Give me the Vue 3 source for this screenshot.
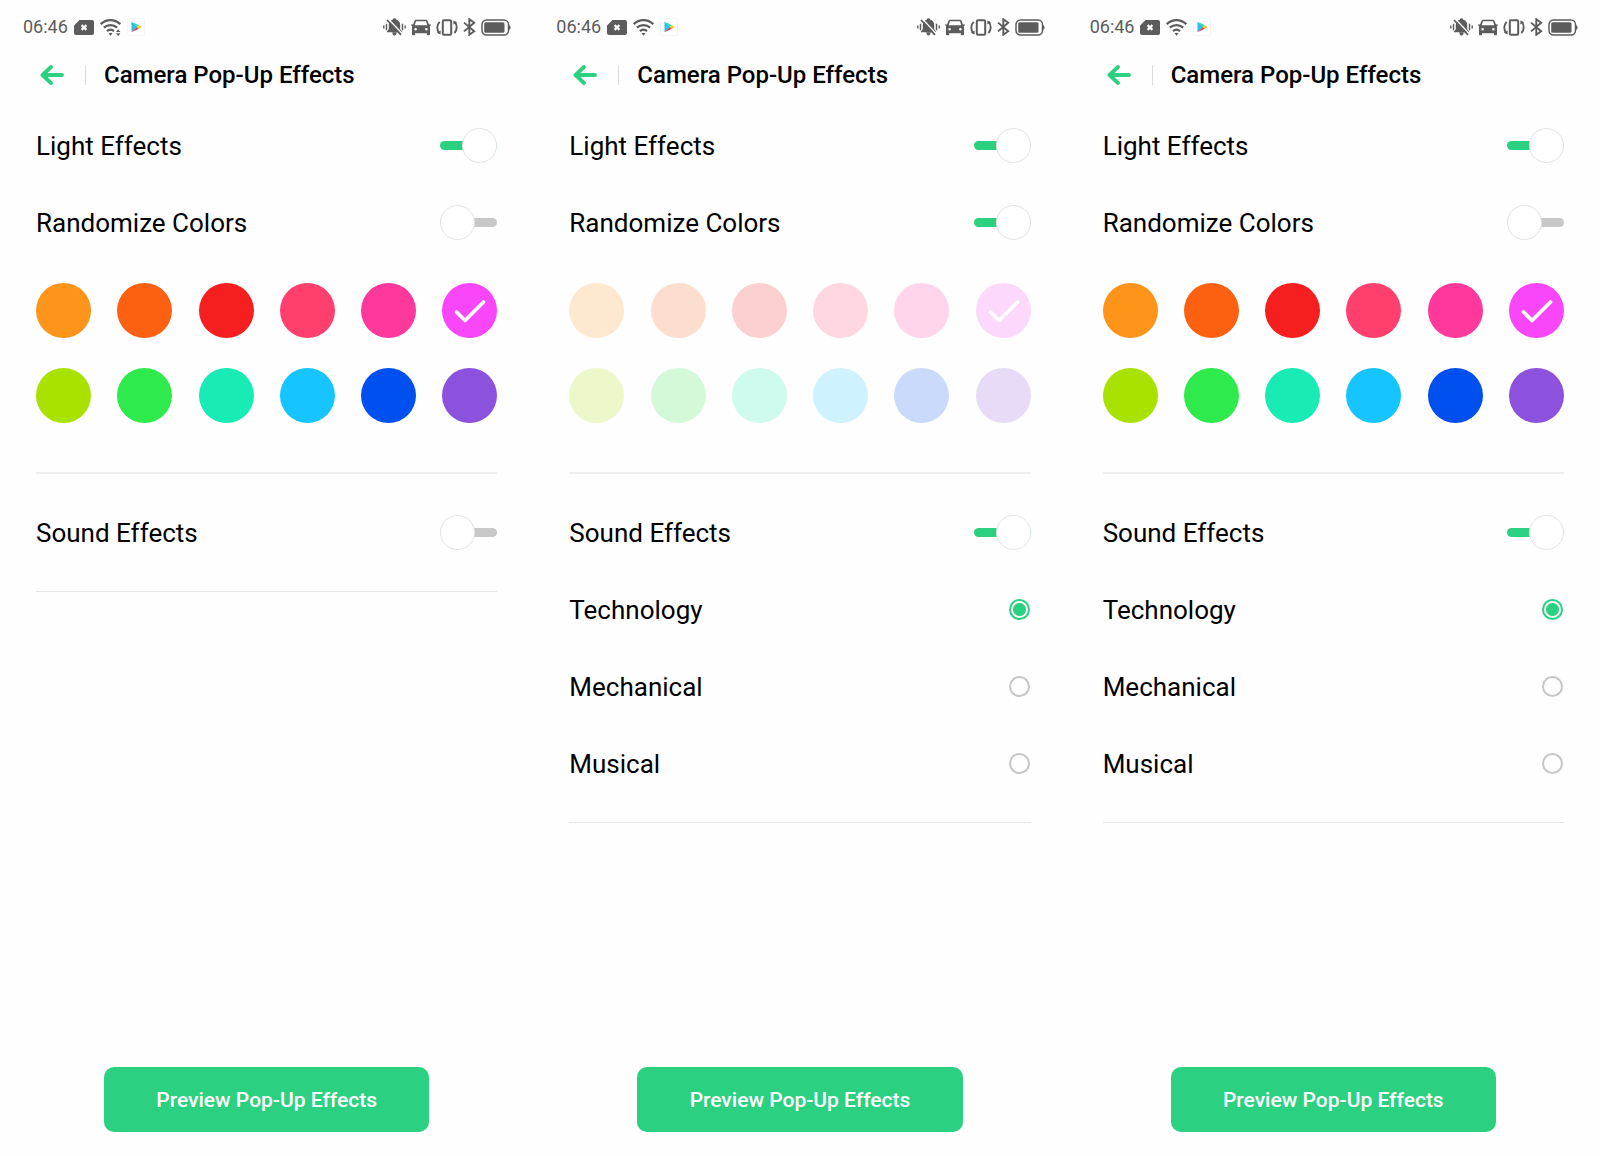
<script setup>
import { ref } from 'vue'

const colors = [
  { name: 'Orange', value: '#ff941a' },
  { name: 'Deep orange', value: '#fc6011' },
  { name: 'Red', value: '#f51f1f' },
  { name: 'Coral', value: '#ff406e' },
  { name: 'Pink', value: '#ff389c' },
  { name: 'Magenta', value: '#f846f8' },
  { name: 'Lime', value: '#a9e200' },
  { name: 'Green', value: '#2fea4c' },
  { name: 'Mint', value: '#18ebb3' },
  { name: 'Sky blue', value: '#16c4ff' },
  { name: 'Blue', value: '#0050f0' },
  { name: 'Purple', value: '#8d52dd' }
]

const sounds = ['Technology', 'Mechanical', 'Musical']

// each screen keeps its own settings
const screens = ref([
  { id: 'a', transfer: true, light: true, random: false, sound: false, color: 'Magenta', tone: 'Technology' },
  { id: 'b', transfer: false, light: true, random: true, sound: true, color: 'Magenta', tone: 'Technology' },
  { id: 'c', transfer: false, light: true, random: false, sound: true, color: 'Magenta', tone: 'Technology' }
])
</script>

<template>
  <div class="screens">
    <section v-for="s in screens" :key="s.id" class="screen">
      <div class="status-bar">
        <div class="status-left">
          <span class="time">06:46</span>
          <svg class="sim" width="20" height="15" viewBox="0 0 20 15">
            <path d="M5.5 0H18a2 2 0 0 1 2 2v11a2 2 0 0 1-2 2H2a2 2 0 0 1-2-2V5.5z" fill="#5c5c5c" />
            <path d="M7.600 5.100l4.800 4.800M12.400 5.100L7.600 9.900" stroke="#fff" stroke-width="2.200" />
          </svg>
          <svg class="wifi" width="21" height="17" viewBox="0 0 21 17">
            <g fill="none" stroke="#5c5c5c" stroke-width="2.300">
              <path d="M.8 5.2C6.300-.2 14.700-.2 20.200 5.200" />
              <path d="M3.900 8.700c3.700-3.500 9.500-3.500 13.200 0" />
              <path d="M7 12.100c2-1.800 5-1.800 7 0" />
            </g>
            <path d="M8.500 14.300q2-1.200 4 0l-2 2.400z" fill="#5c5c5c" />
            <g v-if="s.transfer">
              <path d="M14.600 9.800h6.400V17h-6.400z" fill="#fff" />
              <path d="M16 13l2.200-2.700L20.400 13zM16 14.200l2.200 2.700 2.200-2.700z" fill="#5c5c5c" />
            </g>
          </svg>
          <svg class="play" width="18" height="18" viewBox="0 0 18 18">
            <rect x=".5" y=".5" width="17" height="17" rx="2" fill="#fff" stroke="#f4f4f4" />
            <path d="M4.500 3.800v10.400L9.800 9z" fill="#1fc3ea" />
            <path d="M4.500 3.800L11.800 7.300 9.800 9z" fill="#22d3b0" />
            <path d="M4.500 14.200L11.800 10.700 9.800 9z" fill="#e5394f" />
            <path d="M11.800 7.300L14.600 9l-2.800 1.700-2-1.700z" fill="#fbc31c" />
          </svg>
        </div>
        <div class="status-right">
          <svg width="23" height="18" viewBox="0 0 23 18">
            <path d="M11.500.3c.9 0 1.400.5 1.500 1.200 2.600.7 4.200 2.700 4.200 5.500v4.300l1.900 2.200v.8H3.900v-.8l1.900-2.200V7c0-2.800 1.600-4.800 4.200-5.500.1-.7.6-1.200 1.500-1.200z" fill="#5c5c5c" />
            <path d="M9.300 14.200h4.400c0 2-.8 3.200-2.200 3.200s-2.200-1.200-2.200-3.200z" fill="#5c5c5c" />
            <path d="M5.300.9l14 14.800" stroke="#fff" stroke-width="1.500" />
            <path d="M4 2l14 14.800" stroke="#5c5c5c" stroke-width="1.800" />
            <path d="M.8 7.500v3M3.500 5.800v6.400M19.500 5.800v6.400M22.200 7.500v3" stroke="#5c5c5c" stroke-width="1.400" />
          </svg>
          <svg width="20" height="17" viewBox="0 0 20 17">
            <path fill-rule="evenodd" d="M5 .8h10c.8 0 1.300.4 1.600 1.100l1.400 3.700 1.600-.4.300 1.200-1.200.7c.2.400.3.800.3 1.300v7.100c0 .5-.3.800-.8.800h-1.500c-.5 0-.8-.3-.8-.8V14.200H4.100v1.300c0 .5-.3.800-.8.800H1.800c-.5 0-.8-.3-.8-.8V8.400c0-.5.100-.9.300-1.300L.1 6.400.4 5.200l1.600.4 1.400-3.700C3.700 1.200 4.200.8 5 .8zM5 2.300L3.700 6.300h12.600L15 2.300zM4.600 8.900a1.300 1.300 0 1 0 0 2.600 1.300 1.300 0 0 0 0-2.600zm10.800 0a1.300 1.300 0 1 0 0 2.600 1.300 1.300 0 0 0 0-2.600z" fill="#5c5c5c" />
          </svg>
          <svg width="22" height="17" viewBox="0 0 22 17">
            <g fill="none" stroke="#5c5c5c">
              <rect x="6.800" y="1.200" width="8.400" height="14.600" rx="1.200" stroke-width="2" />
              <path d="M3.600 2.800C.6 6 .6 11 3.200 14M18.400 14.200c3-3.200 3-8.200.4-11.200" stroke-width="1.900" />
            </g>
            <path d="M.8 13.800l3.800-2.400v4zM21.200 3.200l-3.800 2.400v-4z" fill="#5c5c5c" />
          </svg>
          <svg width="13" height="18" viewBox="0 0 13 18">
            <path d="M1 4.600l10.200 8.700-4.900 3.500V1.200l4.900 3.500L1 13.400" fill="none" stroke="#5c5c5c" stroke-width="1.900" />
          </svg>
          <svg width="30" height="17" viewBox="0 0 30 17">
            <rect x="1" y="1" width="26.500" height="15" rx="4.500" fill="none" stroke="#5c5c5c" stroke-width="1.500" />
            <rect x="3.200" y="3.300" width="20.300" height="10.400" rx="1.500" fill="#5c5c5c" />
            <path d="M28 6.300c1 .2 1.600 1.100 1.600 2.200s-.6 2-1.600 2.200z" fill="#5c5c5c" />
          </svg>
        </div>
      </div>

      <header class="title-bar">
        <button class="back" type="button" aria-label="Back">
          <svg width="24" height="20" viewBox="0 0 24 20">
            <path d="M11 2L2.500 10 11 18M3 10h19" fill="none" stroke="#2bd180" stroke-width="3.800" stroke-linecap="round" stroke-linejoin="round" />
          </svg>
        </button>
        <h1>Camera Pop-Up Effects</h1>
      </header>

      <main class="settings">
        <div class="group">
          <label class="row">
            <span>Light Effects</span>
            <input v-model="s.light" class="switch" type="checkbox" role="switch" />
          </label>
          <label class="row">
            <span>Randomize Colors</span>
            <input v-model="s.random" class="switch" type="checkbox" role="switch" />
          </label>
          <div :class="['palette', { 'palette-off': s.random }]">
            <label v-for="c in colors" :key="c.name" class="swatch">
              <input
                v-model="s.color"
                type="radio"
                :name="'color-' + s.id"
                :value="c.name"
                :aria-label="c.name"
                :disabled="s.random"
                :style="{ backgroundColor: c.value }"
              />
              <svg v-if="s.color === c.name" class="check" width="55" height="55" viewBox="0 0 55 55">
                <path d="M14.500 29l8.500 8.500L41.500 19" fill="none" stroke="#fff" stroke-width="3.800" stroke-linecap="round" stroke-linejoin="round" />
              </svg>
            </label>
          </div>
        </div>

        <div class="group sound-group">
          <label class="row">
            <span>Sound Effects</span>
            <input v-model="s.sound" class="switch" type="checkbox" role="switch" />
          </label>
          <template v-if="s.sound">
            <label v-for="tone in sounds" :key="tone" class="row">
              <span>{{ tone }}</span>
              <input v-model="s.tone" class="radio" type="radio" :name="'tone-' + s.id" :value="tone" />
            </label>
          </template>
        </div>
      </main>

      <footer class="footer">
        <button class="preview" type="button">Preview Pop-Up Effects</button>
      </footer>
    </section>
  </div>
</template>

<style>
body {
  margin: 0;
  background: #fefefe;
}
</style>

<style scoped>
.screens {
  display: grid;
  grid-template-columns: repeat(3, 1fr);
  min-height: 100vh;
  font-family: Roboto, "Liberation Sans", sans-serif;
  color: #000;
}

.screen {
  display: flex;
  flex-direction: column;
  min-width: 0;
}

/* status bar */
.status-bar {
  display: flex;
  justify-content: space-between;
  align-items: center;
  height: 54px;
  padding: 0 22px 0 23px;
}

.status-left,
.status-right {
  display: flex;
  align-items: center;
}

.status-left {
  gap: 6px;
}

.status-right {
  gap: 5px;
}

.time {
  font-size: 18px;
  line-height: 20px;
  color: #5c5c5c;
}

/* title bar */
.title-bar {
  display: flex;
  align-items: center;
  height: 41px;
  padding: 0 36px;
}

.back {
  display: flex;
  padding: 0 21px 0 4px;
  border: 0;
  border-right: 1px solid #dcdcdc;
  background: none;
  cursor: pointer;
}

h1 {
  margin: 0 0 0 18px;
  font-size: 24px;
  font-weight: 500;
  line-height: 28px;
}

/* settings */
.settings {
  flex: 1;
  padding: 12px 36px 0;
}

.group {
  border-bottom: 2px solid #efefef;
  padding-bottom: 49px;
}

.sound-group {
  border-bottom-width: 1px;
  border-bottom-color: #e6e6e6;
  padding: 20px 0;
}

.row {
  display: flex;
  justify-content: space-between;
  align-items: center;
  height: 77px;
  font-size: 26px;
  line-height: 32px;
  cursor: pointer;
}

.switch {
  appearance: none;
  position: relative;
  width: 57px;
  height: 35px;
  margin: 0;
  cursor: pointer;
}

.switch::before {
  content: "";
  position: absolute;
  top: 13px;
  left: 0;
  right: 0;
  height: 9px;
  border-radius: 5px;
  background: #c8c8c8;
}

.switch::after {
  content: "";
  position: absolute;
  top: 0;
  left: 0;
  box-sizing: border-box;
  width: 35px;
  height: 35px;
  border: 1px solid #e4e4e4;
  border-radius: 50%;
  background: #fff;
}

.switch:checked::before {
  background: #2bd180;
}

.switch:checked::after {
  left: auto;
  right: 0;
}

.radio {
  appearance: none;
  box-sizing: border-box;
  width: 21px;
  height: 21px;
  margin: 0 1px 0 0;
  border: 2px solid #c6c6c6;
  border-radius: 50%;
  cursor: pointer;
}

.radio:checked {
  border-color: #2bd180;
  background: radial-gradient(circle, #2bd180 6px, transparent 7px);
}

.palette {
  display: grid;
  grid-template-columns: repeat(6, 55px);
  justify-content: space-between;
  row-gap: 30px;
  padding-top: 22px;
}

.palette-off {
  opacity: 0.2;
}

.swatch {
  position: relative;
  height: 55px;
}

.swatch input {
  appearance: none;
  display: block;
  width: 55px;
  height: 55px;
  margin: 0;
  border-radius: 50%;
  cursor: pointer;
}

.check {
  position: absolute;
  inset: 0;
  pointer-events: none;
}

/* bottom button */
.footer {
  display: flex;
  justify-content: center;
  padding: 0 104px 24px;
}

.preview {
  flex: 1;
  height: 65px;
  border: 0;
  border-radius: 10px;
  background: #2bd180;
  color: #fff;
  font-family: inherit;
  font-size: 21px;
  font-weight: 500;
  cursor: pointer;
}
</style>
